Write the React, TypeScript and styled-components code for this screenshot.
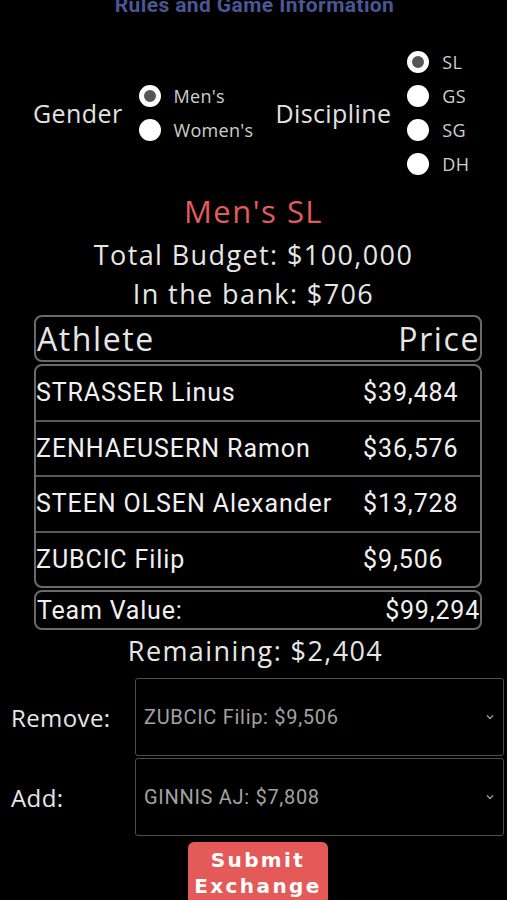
import React, { useState } from "react";
import styled, { createGlobalStyle } from "styled-components";

const GlobalStyle = createGlobalStyle`
  html, body {
    margin: 0;
    padding: 0;
    background: #000;
    color: #e6e6e6;
    font-family: "Open Sans", sans-serif;
  }
`;

const Page = styled.div`
  width: 507px;
  height: 900px;
  overflow: hidden;
  display: flex;
  flex-direction: column;
  align-items: center;
`;

const RulesLink = styled.div`
  margin-top: -7px;
  margin-left: 2px;
  color: #4b5694;
  font-family: Roboto, sans-serif;
  font-weight: 700;
  font-size: 21px;
  line-height: 24px;
  letter-spacing: 0.4px;
`;

const Filters = styled.div`
  display: flex;
  align-items: center;
  gap: 22px;
  margin-top: 33px;
  padding-left: 33px;
  width: 100%;
  box-sizing: border-box;
`;

const FilterGroup = styled.div`
  display: flex;
  align-items: center;
`;

const FilterLabel = styled.div`
  font-size: 25px;
  letter-spacing: 0.4px;
  color: #e2e2e2;
  margin-right: 16px;
`;

const RadioList = styled.div`
  display: flex;
  flex-direction: column;
  gap: 11px;
`;

const RadioRow = styled.label`
  display: flex;
  align-items: center;
  gap: 13px;
  font-size: 18px;
  letter-spacing: 0.3px;
  color: #cfcfcf;
  height: 23px;
`;

const Dot = styled.span<{ $checked: boolean }>`
  width: 22px;
  height: 22px;
  border-radius: 50%;
  box-sizing: border-box;
  background: ${(p) => (p.$checked ? "#555" : "#fff")};
  border: ${(p) => (p.$checked ? "5px solid #fff" : "none")};
`;

const Heading = styled.div`
  margin-top: 18px;
  margin-bottom: 6px;
  color: #e25c5c;
  font-size: 31px;
  letter-spacing: 1.5px;
  line-height: 36px;
`;

const Stat = styled.div`
  font-size: 27px;
  letter-spacing: 1.4px;
  line-height: 39px;
  color: #e6e6e6;
`;

const Box = styled.div`
  align-self: flex-start;
  margin-left: 34px;
  width: 448px;
  box-sizing: border-box;
  border: 2px solid #6a6a6a;
  border-radius: 8px;
  margin-top: 2px;
`;

const HeaderRow = styled.div`
  display: flex;
  justify-content: space-between;
  align-items: center;
  height: 43px;
  padding-left: 1px;
  font-size: 32px;
  color: #e6e6e6;
  letter-spacing: 1.6px;
`;

const AthleteRow = styled.div`
  display: flex;
  align-items: center;
  height: 53.5px;
  font-family: Roboto, sans-serif;
  font-size: 25px;
  letter-spacing: 0.9px;
  color: #f0f0f0;
  border-top: ${(p: { $first: boolean }) => (p.$first ? "none" : "2px solid #5a5a5a")};
`;

const Name = styled.span`
  flex: 1;
`;

const Price = styled.span`
  width: 117px;
`;

const ValueRow = styled.div`
  display: flex;
  justify-content: space-between;
  align-items: center;
  height: 36px;
  padding-left: 1px;
  font-family: Roboto, sans-serif;
  font-size: 25px;
  letter-spacing: 0.8px;
  color: #f0f0f0;
`;

const Remaining = styled.div`
  font-size: 27px;
  letter-spacing: 1.4px;
  line-height: 38px;
  margin-top: 2px;
  margin-left: 4px;
  color: #e6e6e6;
`;

const Exchange = styled.div`
  width: 100%;
  display: flex;
  flex-direction: column;
  gap: 2px;
  margin-top: 8px;
`;

const ExchangeRow = styled.div`
  display: flex;
  align-items: center;
`;

const ExchangeLabel = styled.div`
  width: 135px;
  padding-left: 11px;
  box-sizing: border-box;
  font-size: 24px;
  letter-spacing: 0.4px;
  color: #e6e6e6;
`;

const Select = styled.div`
  flex: 0 0 369px;
  height: 78px;
  box-sizing: border-box;
  border: 1px solid #4e4e4e;
  border-radius: 3px;
  display: flex;
  align-items: center;
  justify-content: space-between;
  padding: 0 8px 0 8px;
  font-family: Roboto, sans-serif;
  font-size: 20px;
  letter-spacing: 0.7px;
  color: #a3a3a3;
`;

const SubmitButton = styled.button`
  margin-top: 6px;
  margin-left: 9px;
  width: 140px;
  background: #e45a58;
  border: none;
  border-radius: 6px;
  color: #fff;
  font-family: "DejaVu Sans", sans-serif;
  font-weight: 700;
  font-size: 20px;
  letter-spacing: 2.4px;
  line-height: 26px;
  padding: 5px 2px;
`;

const Chevron = () => (
  <svg width="10" height="10" viewBox="0 0 10 10">
    <path d="M2 3.5 L5 6.5 L8 3.5" fill="none" stroke="#9a9a9a" strokeWidth="1.4" />
  </svg>
);

const athletes = [
  { name: "STRASSER Linus", price: "$39,484" },
  { name: "ZENHAEUSERN Ramon", price: "$36,576" },
  { name: "STEEN OLSEN Alexander", price: "$13,728" },
  { name: "ZUBCIC Filip", price: "$9,506" },
];

export default function App() {
  const [gender, setGender] = useState("Men's");
  const [discipline, setDiscipline] = useState("SL");

  return (
    <Page>
      <GlobalStyle />
      <RulesLink>Rules and Game Information</RulesLink>
      <Filters>
        <FilterGroup>
          <FilterLabel>Gender</FilterLabel>
          <RadioList>
            {["Men's", "Women's"].map((g) => (
              <RadioRow key={g} onClick={() => setGender(g)}>
                <Dot $checked={gender === g} />
                {g}
              </RadioRow>
            ))}
          </RadioList>
        </FilterGroup>
        <FilterGroup>
          <FilterLabel>Discipline</FilterLabel>
          <RadioList>
            {["SL", "GS", "SG", "DH"].map((d) => (
              <RadioRow key={d} onClick={() => setDiscipline(d)}>
                <Dot $checked={discipline === d} />
                {d}
              </RadioRow>
            ))}
          </RadioList>
        </FilterGroup>
      </Filters>
      <Heading>
        {gender} {discipline}
      </Heading>
      <Stat>Total Budget: $100,000</Stat>
      <Stat>In the bank: $706</Stat>
      <Box>
        <HeaderRow>
          <span>Athlete</span>
          <span>Price</span>
        </HeaderRow>
      </Box>
      <Box>
        {athletes.map((a, i) => (
          <AthleteRow key={a.name} $first={i === 0}>
            <Name>{a.name}</Name>
            <Price>{a.price}</Price>
          </AthleteRow>
        ))}
      </Box>
      <Box>
        <ValueRow>
          <span>Team Value:</span>
          <span>$99,294</span>
        </ValueRow>
      </Box>
      <Remaining>Remaining: $2,404</Remaining>
      <Exchange>
        <ExchangeRow>
          <ExchangeLabel>Remove:</ExchangeLabel>
          <Select>
            ZUBCIC Filip: $9,506
            <Chevron />
          </Select>
        </ExchangeRow>
        <ExchangeRow>
          <ExchangeLabel>Add:</ExchangeLabel>
          <Select>
            GINNIS AJ: $7,808
            <Chevron />
          </Select>
        </ExchangeRow>
      </Exchange>
      <SubmitButton>Submit Exchange</SubmitButton>
    </Page>
  );
}
